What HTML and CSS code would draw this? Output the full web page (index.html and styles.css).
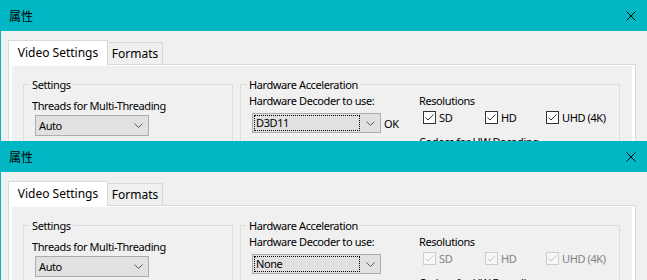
FILE: index.html
```html
<!DOCTYPE html>
<html lang="zh-CN">
<head>
    <meta charset="UTF-8">
    <title>属性</title>
    <link rel="stylesheet" href="styles.css">
</head>
<body>
    <div class="window">
        <div class="titlebar">
            <span class="title">属性</span>
            <svg class="close" width="10" height="10" viewBox="0 0 10 10"><path d="M0.5 0.5 L9.5 9.5 M9.5 0.5 L0.5 9.5" stroke="#000" stroke-width="1" fill="none"/></svg>
        </div>
        <div class="tabs">
            <div class="tab active">Video Settings</div>
            <div class="tab">Formats</div>
        </div>
        <div class="panel">
            <div class="page">
                <fieldset class="group settings">
                    <legend>Settings</legend>
                    <div class="label threads">Threads for Multi-Threading</div>
                    <div class="combo combo-threads">
                        <span class="value">Auto</span>
                        <svg class="chevron" width="9" height="5" viewBox="0 0 9 5"><path d="M0.5 0.5 L4.5 4.5 L8.5 0.5" stroke="#5a5a5a" fill="none"/></svg>
                    </div>
                </fieldset>
                <fieldset class="group hw">
                    <legend>Hardware Acceleration</legend>
                    <div class="hw-cols">
                        <div class="decoder">
                            <div class="label">Hardware Decoder to use:</div>
                            <div class="combo-row">
                                <div class="combo combo-decoder">
                                    <span class="value focus">D3D11</span>
                                    <svg class="chevron" width="9" height="5" viewBox="0 0 9 5"><path d="M0.5 0.5 L4.5 4.5 L8.5 0.5" stroke="#5a5a5a" fill="none"/></svg>
                                </div>
                                <span class="status">OK</span>
                            </div>
                        </div>
                        <div class="resolutions">
                            <div class="label">Resolutions</div>
                            <div class="checks">
                                <label class="check"><span class="box"><svg width="11" height="11" viewBox="0 0 11 11"><path d="M1.5 5.5 L4 8 L9.5 2.5" stroke="#333" fill="none"/></svg></span>SD</label>
                                <label class="check"><span class="box"><svg width="11" height="11" viewBox="0 0 11 11"><path d="M1.5 5.5 L4 8 L9.5 2.5" stroke="#333" fill="none"/></svg></span>HD</label>
                                <label class="check"><span class="box"><svg width="11" height="11" viewBox="0 0 11 11"><path d="M1.5 5.5 L4 8 L9.5 2.5" stroke="#333" fill="none"/></svg></span>UHD (4K)</label>
                            </div>
                            <div class="label codecs">Codecs for HW Decoding</div>
                        </div>
                    </div>
                </fieldset>
            </div>
        </div>
    </div>

    <div class="window">
        <div class="titlebar">
            <span class="title">属性</span>
            <svg class="close" width="10" height="10" viewBox="0 0 10 10"><path d="M0.5 0.5 L9.5 9.5 M9.5 0.5 L0.5 9.5" stroke="#000" stroke-width="1" fill="none"/></svg>
        </div>
        <div class="tabs">
            <div class="tab active">Video Settings</div>
            <div class="tab">Formats</div>
        </div>
        <div class="panel">
            <div class="page">
                <fieldset class="group settings">
                    <legend>Settings</legend>
                    <div class="label threads">Threads for Multi-Threading</div>
                    <div class="combo combo-threads">
                        <span class="value">Auto</span>
                        <svg class="chevron" width="9" height="5" viewBox="0 0 9 5"><path d="M0.5 0.5 L4.5 4.5 L8.5 0.5" stroke="#5a5a5a" fill="none"/></svg>
                    </div>
                </fieldset>
                <fieldset class="group hw">
                    <legend>Hardware Acceleration</legend>
                    <div class="hw-cols">
                        <div class="decoder">
                            <div class="label">Hardware Decoder to use:</div>
                            <div class="combo-row">
                                <div class="combo combo-decoder">
                                    <span class="value focus">None</span>
                                    <svg class="chevron" width="9" height="5" viewBox="0 0 9 5"><path d="M0.5 0.5 L4.5 4.5 L8.5 0.5" stroke="#5a5a5a" fill="none"/></svg>
                                </div>
                            </div>
                        </div>
                        <div class="resolutions">
                            <div class="label">Resolutions</div>
                            <div class="checks disabled">
                                <label class="check"><span class="box"><svg width="11" height="11" viewBox="0 0 11 11"><path d="M1.5 5.5 L4 8 L9.5 2.5" stroke="#c4c4c4" fill="none"/></svg></span>SD</label>
                                <label class="check"><span class="box"><svg width="11" height="11" viewBox="0 0 11 11"><path d="M1.5 5.5 L4 8 L9.5 2.5" stroke="#c4c4c4" fill="none"/></svg></span>HD</label>
                                <label class="check"><span class="box"><svg width="11" height="11" viewBox="0 0 11 11"><path d="M1.5 5.5 L4 8 L9.5 2.5" stroke="#c4c4c4" fill="none"/></svg></span>UHD (4K)</label>
                            </div>
                            <div class="label codecs">Codecs for HW Decoding</div>
                        </div>
                    </div>
                </fieldset>
            </div>
        </div>
    </div>
</body>
</html>
```

FILE: styles.css
```css
body {
    margin: 0;
    padding: 0;
    width: 647px;
    height: 280px;
    overflow: hidden;
    background-color: #f0f0f0;
    font-family: "Segoe UI", "Noto Sans", sans-serif;
    font-size: 11px;
    letter-spacing: -0.4px;
    color: #000000;
}
.window {
    height: 141px;
    overflow: hidden;
    background-color: #f0f0f0;
    border-left: 1px solid #00b7c3;
}
.window + .window {
    height: 139px;
}
.titlebar {
    height: 31px;
    background-color: #00b7c3;
    margin-left: -1px;
    padding: 0 11px 0 9px;
    display: flex;
    align-items: center;
    justify-content: space-between;
}
.title {
    font-family: "Noto Sans CJK SC", "Noto Sans", sans-serif;
    font-size: 12px;
    letter-spacing: 0;
    line-height: 16px;
}
.close {
    display: block;
}
.tabs {
    display: flex;
    align-items: flex-end;
    margin: 9px 0 0 7px;
    font-size: 12px;
    letter-spacing: 0;
}
.tab {
    box-sizing: border-box;
    border: 1px solid #d9d9d9;
    border-bottom: none;
    text-align: center;
}
.tab.active {
    position: relative;
    z-index: 1;
    width: 100px;
    height: 25px;
    line-height: 23px;
    margin-bottom: -1px;
    background-color: #ffffff;
}
.tab + .tab {
    width: 56px;
    height: 22px;
    line-height: 21px;
    margin-left: -1px;
    background-color: #f0f0f0;
}
.panel {
    width: 628px;
    box-sizing: border-box;
    margin-left: 7px;
    border: 1px solid #d9d9d9;
    background-color: #ffffff;
    padding: 1px 3px 3px 3px;
}
.page {
    display: flex;
    background-color: #f0f0f0;
    padding: 11px 0 0 11px;
    height: 120px;
}
.group {
    box-sizing: border-box;
    margin: 0;
    padding: 0 0 20px 8px;
    border: 1px solid #dcdcdc;
    min-width: 0;
}
.group legend {
    padding: 0 2px;
    margin-left: -2px;
    line-height: 15px;
}
.settings {
    width: 210px;
}
.hw {
    width: 380px;
    margin-left: 7px;
}
.label {
    line-height: 15px;
    white-space: nowrap;
}
.threads {
    margin-top: 6px;
}
.combo {
    box-sizing: border-box;
    display: flex;
    align-items: center;
    justify-content: space-between;
    border: 1px solid #adadad;
    background-color: #e1e1e1;
}
.combo-threads {
    width: 114px;
    height: 21px;
    margin: 2px 0 0 3px;
    padding: 0 5px 0 3px;
}
.combo-threads .value {
    line-height: 19px;
}
.hw-cols {
    display: grid;
    grid-template-columns: 170px auto;
    margin-top: 1px;
}
.combo-row {
    display: flex;
    align-items: center;
    margin-top: 5px;
}
.combo-decoder {
    width: 129px;
    height: 20px;
    margin-left: 3px;
    padding: 0 5px 0 1px;
}
.combo-decoder .value {
    box-sizing: border-box;
    width: 106px;
    height: 16px;
    line-height: 14px;
    padding-left: 1px;
}
.focus {
    border: 1px dotted #000000;
}
.status {
    margin-left: 3px;
}
.checks {
    display: grid;
    grid-template-columns: 62px 61px auto;
    margin: 3px 0 0 4px;
}
.check {
    display: flex;
    align-items: center;
    line-height: 13px;
}
.box {
    box-sizing: border-box;
    width: 13px;
    height: 13px;
    border: 1px solid #333333;
    background-color: #ffffff;
    margin-right: 3px;
}
.box svg {
    display: block;
}
.checks.disabled .check {
    color: #838383;
}
.checks.disabled .box {
    border-color: #cccccc;
    background-color: #f7f7f7;
}
.codecs {
    margin-top: 10px;
}
```
